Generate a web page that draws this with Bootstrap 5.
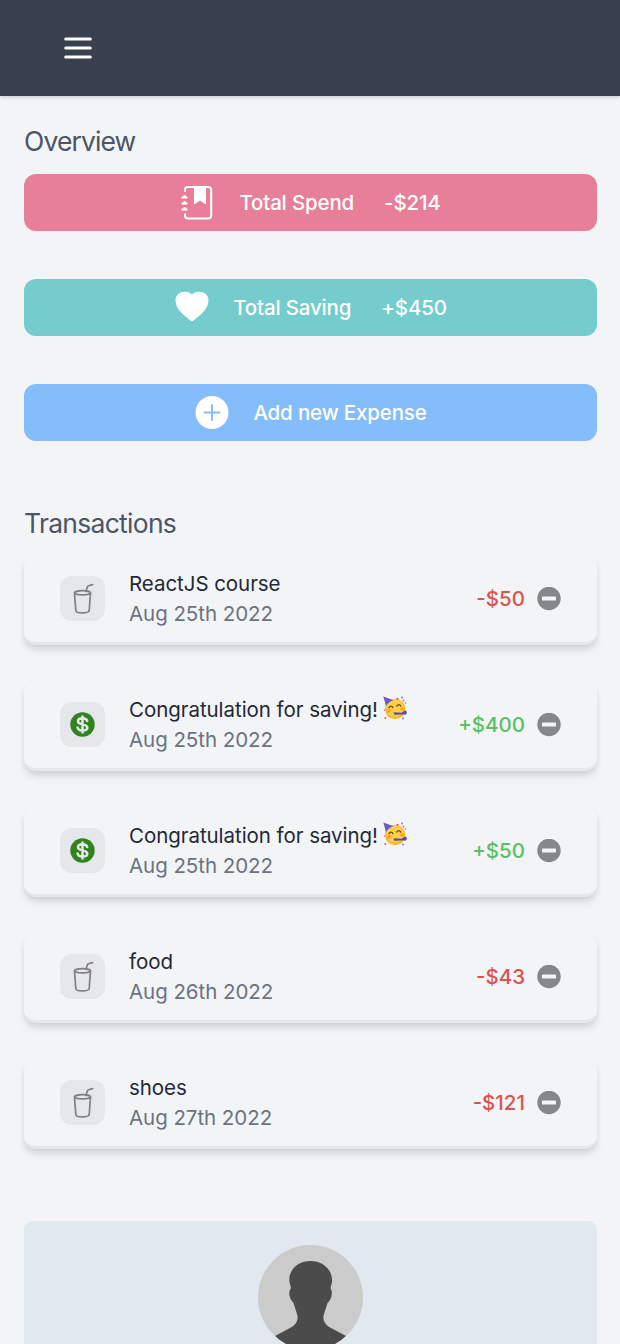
<!DOCTYPE html>
<html lang="en">
<head>
<meta charset="utf-8">
<meta name="viewport" content="width=device-width, initial-scale=1">
<title>Expenses</title>
<link rel="stylesheet" href="https://cdn.jsdelivr.net/npm/bootstrap@5.3.0/dist/css/bootstrap.min.css">
<style>
body{background:#f3f4f6;font-family:Inter,sans-serif;font-size:20.5px;font-weight:420;letter-spacing:-.05px;line-height:30px;color:#1f2937}
svg{display:block;flex:none}
.topbar{height:96px;background:#394150;padding:0 60px;box-shadow:0 1px 4px rgba(0,0,0,.2)}
.content{padding:24px 23px 0 24px}
.title{font-size:26.5px;line-height:42px;font-weight:420;letter-spacing:-.88px;color:#4b5563;margin:0 0 12px}
.title-list{margin:61px 0 11px;letter-spacing:-.72px}
.tile{height:57px;border-radius:12px;color:#fff;margin-bottom:48px;border:0;width:100%;padding:0;font-weight:450;letter-spacing:-.16px}
.tile svg{margin:-2px 23px 0 0}
.amount{margin-left:30px}
.spend{background:#e77f98}.saving{background:#75cccd}.adding{background:#84bdf9}
.entry{height:90px;border-radius:12px;border-bottom:3px solid #e5e7eb;background:#f3f4f6;margin-bottom:36px;padding:0 36px;box-shadow:0 6px 9px -1.5px rgba(0,0,0,.1),0 3px 6px -1.5px rgba(0,0,0,.07)}
.thumb{width:45px;height:45px;border-radius:12px;background:#e5e7eb;margin-right:24px}
.when{color:#6b7280}
.minus{color:#d9534f}.plus{color:#5bbf66}
.minus,.plus{font-weight:450;letter-spacing:0}
.del{margin-left:12px}
.emoji{margin:1px 0 0 5px}
.profile{height:123px;overflow:hidden;background:#e2e8f0;border-radius:9px 9px 0 0;padding-top:24px;margin-top:72px}
</style>
</head>
<body>
<svg width="0" height="0" class="position-absolute">
<defs>
<symbol id="cup" viewBox="0 0 45 45"><g fill="none" stroke="#808080" stroke-width="1.7" stroke-linecap="round" stroke-linejoin="round"><ellipse cx="22.500" cy="16.800" rx="8" ry="2.100"/><path d="M14.500 17l1.300 17.500c.3 3.200 13 3.200 13.400 0L30.500 17M26 15.500l1.200-4.300c.3-1.300 1-1.500 2-1.700l3.400-.9"/></g></symbol>
<symbol id="coin" viewBox="0 0 45 45"><circle cx="22.500" cy="22.500" r="12.200" fill="#31831f"/><path d="M27.200 19c-.5-2-2.300-2.700-4.700-2.700-2.700 0-4.500 1.100-4.500 3 0 4.200 9.300 2 9.300 6.300 0 2-2 3.100-4.800 3.100-2.600 0-4.500-1-4.900-3.100M22.500 14.500v16" fill="none" stroke="#e5e7eb" stroke-width="2.500" stroke-linecap="round"/></symbol>
<symbol id="remove" viewBox="0 0 24 24"><circle cx="12" cy="11.500" r="11.700" fill="#85878a"/><rect x="5" y="9.500" width="14" height="4" rx=".6" fill="#f3f4f6"/></symbol>
<symbol id="party" viewBox="0 0 24 24"><circle cx="12.200" cy="13" r="10.200" fill="#f6b92d"/><circle cx="12" cy="11.800" r="8.700" fill="#ffd047"/><path d="M.3.500l10.200 3.700C7.500 5 4.500 7.200 3 10z" fill="#7952b3"/><path d="M3.500 2l-1 4M7 3.300L3 9" stroke="#4c72dc" stroke-width="1.200"/><path d="M6 11.500q2-2.800 4 0M13.800 10q2-2.800 4 0" fill="none" stroke="#76441b" stroke-width="1.300" stroke-linecap="round"/><circle cx="6" cy="14.800" r="2" fill="#f79b3b"/><circle cx="19" cy="13" r="1.800" fill="#f79b3b"/><path d="M11.500 16.200l7 .6 3.700-2.200c2.500.8 2 4.400-.7 4l-3.300-.2-5.700.4c-2 .1-2.500-2.300-1-2.600z" fill="#5a4ba7"/><g fill="#e9517b"><circle cx="14.500" cy="2.800" r="1.100"/><circle cx="2.300" cy="22" r="1"/><circle cx="1.500" cy="14" r=".7"/></g><g fill="#5c83ee"><circle cx="19" cy="1.500" r=".9"/><circle cx="22.500" cy="7" r=".8"/><circle cx="20" cy="22.500" r="1"/></g><circle cx="20.500" cy="4.500" r="1" fill="#eb765b"/></symbol>
</defs>
</svg>
<nav class="topbar d-flex align-items-center">
<svg width="36" height="36" viewBox="0 0 36 36" stroke="#fff" stroke-width="3" stroke-linecap="round"><path d="M5.700 9h24.600M5.700 18h24.600M5.700 27h24.600"/></svg>
</nav>
<main class="content">
<h1 class="title">Overview</h1>
<section class="tile spend d-flex align-items-center justify-content-center">
<svg width="36" height="36" viewBox="0 0 36 36" fill="none" stroke="#fff" stroke-width="2" stroke-linejoin="round"><path d="M5 8V6Q5 3 8 3H28Q31.200 3 31.200 6V31.500Q31.200 34.500 28 34.500H8Q5 34.500 5 31.500V29.500"/><path d="M1.500 13.500h6M1.500 19.500h6M1.500 25.500h6M4.700 11v3M4.700 17v3M4.700 23v3" stroke-width="2.200" stroke-linejoin="miter"/><path d="M14 3h12v17.500l-6-4-6 4z" fill="#fff" stroke="none"/></svg>
<span>Total Spend</span><span class="amount">-$214</span>
</section>
<section class="tile saving d-flex align-items-center justify-content-center">
<svg width="36" height="36" viewBox="0 0 36 36" fill="#fff"><path d="M18 32.500C13 28.800 1.500 21.500 1.500 11.500C1.500 2.500 12 .5 18 5.200C24 .5 34.500 2.500 34.500 11.500C34.500 21.500 23 28.800 18 32.500Z"/></svg>
<span>Total Saving</span><span class="amount">+$450</span>
</section>
<button type="button" class="tile adding d-flex align-items-center justify-content-center">
<svg width="36" height="36" viewBox="0 0 36 36"><circle cx="18" cy="18.500" r="16.500" fill="#fff"/><path d="M18 11v15M10.500 18.500h15" stroke="#84bdf9" stroke-width="1.900" stroke-linecap="round"/></svg>
<span>Add new Expense</span>
</button>
<h2 class="title title-list">Transactions</h2>
<article class="entry d-flex align-items-center"><svg class="thumb"><use href="#cup"/></svg><div class="flex-grow-1"><div>ReactJS course</div><div class="when">Aug 25th 2022</div></div><span class="minus">-$50</span><svg class="del" width="24" height="24"><use href="#remove"/></svg></article>
<article class="entry d-flex align-items-center"><svg class="thumb"><use href="#coin"/></svg><div class="flex-grow-1"><div class="d-flex">Congratulation for saving!<svg class="emoji" width="24" height="24"><use href="#party"/></svg></div><div class="when">Aug 25th 2022</div></div><span class="plus">+$400</span><svg class="del" width="24" height="24"><use href="#remove"/></svg></article>
<article class="entry d-flex align-items-center"><svg class="thumb"><use href="#coin"/></svg><div class="flex-grow-1"><div class="d-flex">Congratulation for saving!<svg class="emoji" width="24" height="24"><use href="#party"/></svg></div><div class="when">Aug 25th 2022</div></div><span class="plus">+$50</span><svg class="del" width="24" height="24"><use href="#remove"/></svg></article>
<article class="entry d-flex align-items-center"><svg class="thumb"><use href="#cup"/></svg><div class="flex-grow-1"><div>food</div><div class="when">Aug 26th 2022</div></div><span class="minus">-$43</span><svg class="del" width="24" height="24"><use href="#remove"/></svg></article>
<article class="entry d-flex align-items-center"><svg class="thumb"><use href="#cup"/></svg><div class="flex-grow-1"><div>shoes</div><div class="when">Aug 27th 2022</div></div><span class="minus">-$121</span><svg class="del" width="24" height="24"><use href="#remove"/></svg></article>
<section class="profile d-flex justify-content-center">
<svg width="105" height="105" viewBox="0 0 105 105"><clipPath id="face"><circle cx="52.500" cy="52.500" r="52.500"/></clipPath><g clip-path="url(#face)"><path fill="#cbcbcb" d="M0 0h105v105H0z"/><path fill="#4b4b4b" d="M52.500 16C39 16 30 26 31.500 37L33 43C30 47 31 54 35.500 58L39 69C41 75 38 80 32 83L17 91V105H88V91L73 83C67 80 64 75 66 69L69.500 58C74 54 75 47 72.500 43L74 37C75 26 66 16 52.500 16Z"/></g></svg>
</section>
</main>
<script src="https://cdn.jsdelivr.net/npm/bootstrap@5.3.0/dist/js/bootstrap.bundle.min.js"></script>
</body>
</html>
